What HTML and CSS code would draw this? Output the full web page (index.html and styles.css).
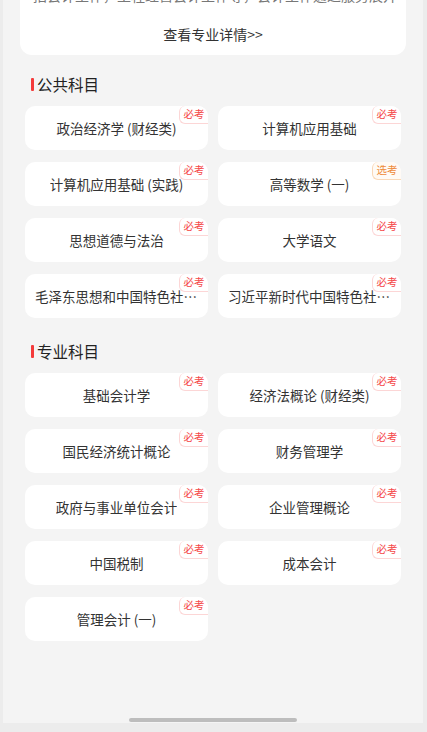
FILE: index.html
```html
<!DOCTYPE html>
<html lang="zh-CN">
<head>
<meta charset="utf-8">
<title>专业科目</title>
<link rel="stylesheet" href="styles.css">
</head>
<body>
<div class="page">
  <section class="intro">
    <p class="intro-text">括会计工作，工程经营会计工作等，会计工作通过服务展开</p>
    <p class="intro-link">查看专业详情&gt;&gt;</p>
  </section>

  <h2 class="section-title">公共科目</h2>
  <div class="grid">
    <div class="card"><span class="name">政治经济学 (财经类)</span><span class="badge must">必考</span></div>
    <div class="card"><span class="name">计算机应用基础</span><span class="badge must">必考</span></div>
    <div class="card"><span class="name">计算机应用基础 (实践)</span><span class="badge must">必考</span></div>
    <div class="card"><span class="name">高等数学 (一)</span><span class="badge opt">选考</span></div>
    <div class="card"><span class="name">思想道德与法治</span><span class="badge must">必考</span></div>
    <div class="card"><span class="name">大学语文</span><span class="badge must">必考</span></div>
    <div class="card"><span class="name">毛泽东思想和中国特色社会主义理论体系概论</span><span class="badge must">必考</span></div>
    <div class="card"><span class="name">习近平新时代中国特色社会主义思想概论</span><span class="badge must">必考</span></div>
  </div>

  <h2 class="section-title second">专业科目</h2>
  <div class="grid">
    <div class="card"><span class="name">基础会计学</span><span class="badge must">必考</span></div>
    <div class="card"><span class="name">经济法概论 (财经类)</span><span class="badge must">必考</span></div>
    <div class="card"><span class="name">国民经济统计概论</span><span class="badge must">必考</span></div>
    <div class="card"><span class="name">财务管理学</span><span class="badge must">必考</span></div>
    <div class="card"><span class="name">政府与事业单位会计</span><span class="badge must">必考</span></div>
    <div class="card"><span class="name">企业管理概论</span><span class="badge must">必考</span></div>
    <div class="card"><span class="name">中国税制</span><span class="badge must">必考</span></div>
    <div class="card"><span class="name">成本会计</span><span class="badge must">必考</span></div>
    <div class="card"><span class="name">管理会计 (一)</span><span class="badge must">必考</span></div>
  </div>

  <div class="home-indicator"></div>
</div>
</body>
</html>
```
FILE: styles.css
```css
* { box-sizing: border-box; }
html, body {
  margin: 0;
  padding: 0;
  background: #ececec;
  font-family: "Noto Sans CJK SC", "Noto Sans", sans-serif;
  color: #333;
}
.page {
  width: 420px;
  height: 723px;
  margin-left: 3px;
  background: #f4f4f4;
  display: flex;
  flex-direction: column;
  overflow: hidden;
}
.intro {
  margin: 0 17px;
  background: #fff;
  border-radius: 0 0 12px 12px;
  padding: 0 0 11px;
  overflow: hidden;
}
.intro-text {
  margin: -15px 0 0;
  padding: 0 13px;
  font-size: 14px;
  line-height: 20px;
  color: #777;
  text-align: center;
  white-space: nowrap;
  overflow: hidden;
}
.intro-link {
  margin: 19px 0 0;
  font-size: 14px;
  line-height: 20px;
  color: #333;
  text-align: center;
}
.section-title {
  margin: 19px 0 0 28px;
  font-size: 15.5px;
  line-height: 20px;
  font-weight: 400;
  color: #222;
  display: flex;
  align-items: center;
  gap: 3px;
}
.section-title::before {
  content: "";
  width: 3px;
  height: 13px;
  background: #f43b3b;
  border-radius: 1px;
}
.section-title.second { margin-top: 23px; }
.grid {
  margin: 12px 23px 0 22px;
  display: grid;
  grid-template-columns: 183px 183px;
  column-gap: 10px;
  row-gap: 12px;
}
.card {
  position: relative;
  height: 44px;
  background: #fff;
  border-radius: 10px;
  display: flex;
  align-items: center;
  justify-content: center;
  padding: 0 10px;
}
.name {
  font-size: 13.5px;
  color: #333;
  white-space: nowrap;
  overflow: hidden;
  text-overflow: ellipsis;
}
.badge {
  position: absolute;
  top: 0;
  right: 0;
  width: 29px;
  height: 18px;
  font-size: 10.5px;
  line-height: 16px;
  text-align: center;
  border: 1px solid;
  border-top: none;
  border-right: none;
  border-radius: 6px 10px 0 6px;
  background: #fff;
}
.badge.must {
  color: #f54848;
  border-color: #fcd6d6;
}
.badge.opt {
  color: #ee8a3a;
  border-color: #f9d8b8;
  background: #fffaf5;
}
.home-indicator {
  margin: auto auto 1px;
  width: 168px;
  height: 4px;
  border-radius: 2px;
  background: #bdbdbd;
}
```
